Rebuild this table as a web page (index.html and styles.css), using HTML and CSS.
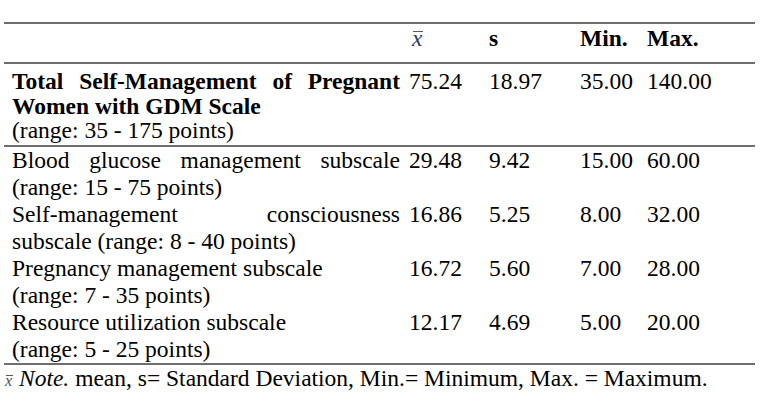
FILE: index.html
```html
<!DOCTYPE html>
<html lang="en">
<head>
<meta charset="utf-8">
<title>Self-Management of Pregnant Women with GDM</title>
<link rel="stylesheet" href="styles.css">
</head>
<body>
<div class="table">
  <div class="row head">
    <div class="c1"></div>
    <div class="num"><span class="xbar">x</span></div>
    <div class="num b">s</div>
    <div class="num b">Min.</div>
    <div class="num b">Max.</div>
  </div>
  <div class="row total">
    <div class="c1">
      <div class="b j">Total Self-Management of Pregnant</div>
      <div class="b">Women with GDM Scale</div>
      <div>(range: 35 - 175 points)</div>
    </div>
    <div class="num">75.24</div>
    <div class="num">18.97</div>
    <div class="num">35.00</div>
    <div class="num">140.00</div>
  </div>
  <div class="row sub">
    <div class="c1">
      <div class="j">Blood glucose management subscale</div>
      <div>(range: 15 - 75 points)</div>
    </div>
    <div class="num">29.48</div>
    <div class="num">9.42</div>
    <div class="num">15.00</div>
    <div class="num">60.00</div>
  </div>
  <div class="row sub">
    <div class="c1">
      <div class="j">Self-management consciousness</div>
      <div>subscale (range: 8 - 40 points)</div>
    </div>
    <div class="num">16.86</div>
    <div class="num">5.25</div>
    <div class="num">8.00</div>
    <div class="num">32.00</div>
  </div>
  <div class="row sub">
    <div class="c1">
      <div>Pregnancy management subscale</div>
      <div>(range: 7 - 35 points)</div>
    </div>
    <div class="num">16.72</div>
    <div class="num">5.60</div>
    <div class="num">7.00</div>
    <div class="num">28.00</div>
  </div>
  <div class="row sub last">
    <div class="c1">
      <div>Resource utilization subscale</div>
      <div>(range: 5 - 25 points)</div>
    </div>
    <div class="num">12.17</div>
    <div class="num">4.69</div>
    <div class="num">5.00</div>
    <div class="num">20.00</div>
  </div>
  <p class="note"><span class="xbar small">x</span> <i>Note.</i> mean, s= Standard Deviation, Min.= Minimum, Max. = Maximum.</p>
</div>
</body>
</html>
```

FILE: styles.css
```css
body {
  margin: 0;
  background: #ffffff;
  color: #000000;
  font-family: "Liberation Serif", "Times New Roman", serif;
  font-size: 23.5px;
}

.table {
  margin: 22px 0 0 4px;
  width: 751px;
  border-top: 2px solid #6e6e6e;
}

.row {
  display: grid;
  grid-template-columns: 405px 80px 91px 67px 1fr;
}

.c1 {
  padding: 0 9px 0 8px;
}

.b {
  font-weight: bold;
}

.j {
  text-align: justify;
  text-align-last: justify;
}

.head {
  line-height: 24.5px;
  padding: 2px 0 11.5px;
  border-bottom: 2px solid #6e6e6e;
}

.total {
  line-height: 24.5px;
  padding: 5px 0 2px;
  border-bottom: 2px solid #6e6e6e;
}

.sub {
  line-height: 27px;
}

.last {
  border-bottom: 2px solid #6e6e6e;
}

.xbar {
  position: relative;
  font-style: italic;
  color: #2c3862;
  padding: 0 1px 0 3px;
}

.xbar::before {
  content: "";
  position: absolute;
  left: 4px;
  right: 0;
  top: 0.24em;
  border-top: 1.5px solid #555a6a;
}

.xbar.small {
  font-size: 16px;
  padding: 0 1px 0 1px;
  color: #4a5068;
}

.xbar.small::before {
  left: 2px;
  top: 0.22em;
  border-top-width: 1px;
}

.note {
  margin: 0;
  line-height: 27px;
}
```
